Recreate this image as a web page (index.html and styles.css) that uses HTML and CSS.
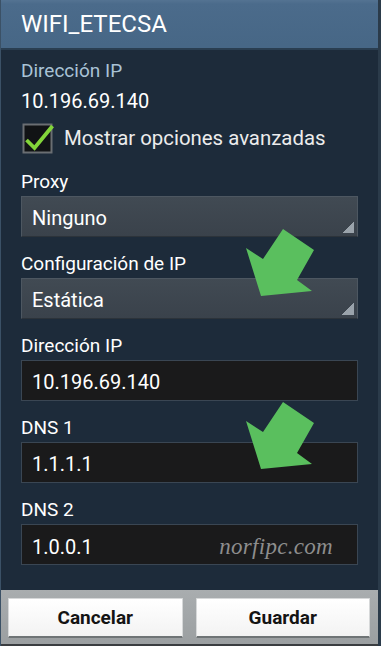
FILE: index.html
```html
<!DOCTYPE html>
<html lang="es">
<head>
<meta charset="utf-8">
<title>WIFI_ETECSA</title>
<link rel="stylesheet" href="styles.css">
</head>
<body>
<div class="screen">
  <header class="titlebar">WIFI_ETECSA</header>
  <main class="content">
    <div class="info-label">Dirección IP</div>
    <div class="info-value">10.196.69.140</div>
    <label class="checkrow">
      <svg class="checkbox" width="32" height="32" viewBox="0 0 32 32" aria-hidden="true">
        <rect x="1.5" y="2.5" width="28" height="28" fill="#111315" stroke="#6a6e72" stroke-width="2"/>
        <polyline points="4.5,18 12.5,26 30.5,4" fill="none" stroke="#82d53a" stroke-width="3.8" stroke-linejoin="miter"/>
      </svg>
      <span>Mostrar opciones avanzadas</span>
    </label>

    <div class="label">Proxy</div>
    <div class="field select">Ninguno<span class="corner"></span></div>

    <div class="label">Configuración de IP</div>
    <div class="field select">Estática<span class="corner"></span></div>

    <div class="label">Dirección IP</div>
    <div class="field input">10.196.69.140</div>

    <div class="label">DNS 1</div>
    <div class="field input">1.1.1.1</div>

    <div class="label">DNS 2</div>
    <div class="field input">1.0.0.1<span class="watermark">norfipc.com</span></div>
  </main>
  <footer class="buttons">
    <button class="btn">Cancelar</button>
    <button class="btn">Guardar</button>
  </footer>

  <svg class="arrow arrow-one" width="72" height="72" viewBox="0 0 72 72" aria-hidden="true">
    <polygon points="39,2 70,23 53,53 68,64 17,69 2,21 19,32" fill="#5abf5e"/>
  </svg>
  <svg class="arrow arrow-two" width="72" height="72" viewBox="0 0 72 72" aria-hidden="true">
    <polygon points="39,2 70,23 53,53 68,64 17,69 2,21 19,32" fill="#5abf5e"/>
  </svg>
</div>
</body>
</html>
```

FILE: styles.css
```css
* { box-sizing: border-box; }

html, body {
  margin: 0;
  padding: 0;
  background: #1d2b3a;
}

body {
  font-family: Roboto, "Noto Sans", "DejaVu Sans", sans-serif;
}

.screen {
  position: relative;
  width: 381px;
  height: 646px;
  display: flex;
  flex-direction: column;
  overflow: hidden;
  background: #1d2b3a;
  border-left: 1px solid #3b5166;
  border-right: 3px solid #2b3b4a;
}

.titlebar {
  height: 50px;
  flex: none;
  padding-left: 20px;
  font-size: 24px;
  line-height: 48px;
  color: #ffffff;
  background: linear-gradient(#547392 0px, #4b6b8b 4px, #476786 44px);
  border-bottom: 2px solid #2a3e51;
}

.content {
  flex: 1;
  padding: 10px 20px 0 20px;
}

.info-label {
  font-size: 19px;
  line-height: 22px;
  color: #a9c3d6;
}

.info-value {
  margin-top: 7px;
  font-size: 20px;
  line-height: 24px;
  color: #ffffff;
}

.checkrow {
  display: flex;
  align-items: center;
  gap: 10px;
  margin-top: 9px;
  margin-left: 1px;
  font-size: 20.4px;
  line-height: 24px;
  color: #ececec;
}

.checkbox { flex: none; display: block; }

.label {
  margin-top: 15px;
  font-size: 19px;
  line-height: 23px;
  color: #ffffff;
}

.checkrow + .label { margin-top: 16px; }

.field {
  position: relative;
  display: flex;
  align-items: baseline;
  margin-top: 3px;
  height: 41px;
  padding: 4px 0 0 10px;
  font-size: 20px;
  line-height: 35px;
  color: #ffffff;
}

.select {
  background: linear-gradient(#414a53, #3a424b);
  border: 1px solid #4d5761;
  border-bottom-color: #2c333a;
}

.input {
  background: #1a1a1b;
  border: 1px solid #3a4653;
}

.corner {
  position: absolute;
  right: 3px;
  bottom: 3px;
  width: 12px;
  height: 12px;
  background: linear-gradient(to bottom right, transparent 50%, #9aa3ab 50%);
}

.watermark {
  margin-left: auto;
  margin-right: 24px;
  font-family: "Liberation Serif", "DejaVu Serif", serif;
  font-style: italic;
  font-size: 23px;
  color: #8d8d8d;
  letter-spacing: 0.3px;
}

.buttons {
  flex: none;
  height: 56px;
  display: flex;
  gap: 13px;
  padding: 8px 8px 0 7px;
  background: linear-gradient(#a9adaf, #9b9fa1);
  border-bottom: 2px solid #3a3d40;
}

.btn {
  flex: 1;
  height: 40px;
  margin: 0;
  font-family: Roboto, "Noto Sans", sans-serif;
  font-weight: 700;
  font-size: 19px;
  color: #141414;
  background: linear-gradient(#ffffff, #f3f3f3);
  border: 1px solid #d6d8d9;
  border-bottom: 2px solid #6f7476;
  border-radius: 1px;
  padding: 0;
}

.arrow {
  position: absolute;
  left: 243px;
}

.arrow-one { top: 227px; }
.arrow-two { top: 400px; }
```
